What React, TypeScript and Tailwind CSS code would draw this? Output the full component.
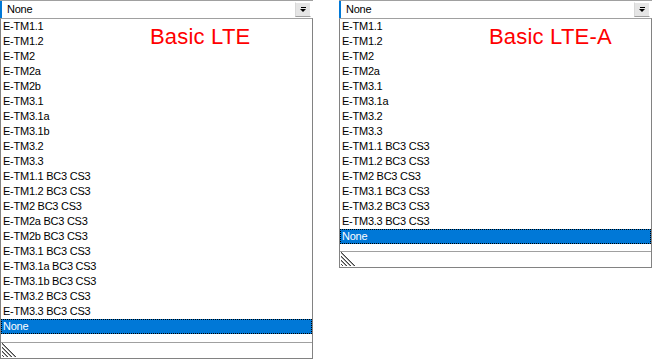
const basicLte = [
  "E-TM1.1",
  "E-TM1.2",
  "E-TM2",
  "E-TM2a",
  "E-TM2b",
  "E-TM3.1",
  "E-TM3.1a",
  "E-TM3.1b",
  "E-TM3.2",
  "E-TM3.3",
  "E-TM1.1 BC3 CS3",
  "E-TM1.2 BC3 CS3",
  "E-TM2 BC3 CS3",
  "E-TM2a BC3 CS3",
  "E-TM2b BC3 CS3",
  "E-TM3.1 BC3 CS3",
  "E-TM3.1a BC3 CS3",
  "E-TM3.1b BC3 CS3",
  "E-TM3.2 BC3 CS3",
  "E-TM3.3 BC3 CS3",
];

const basicLteA = [
  "E-TM1.1",
  "E-TM1.2",
  "E-TM2",
  "E-TM2a",
  "E-TM3.1",
  "E-TM3.1a",
  "E-TM3.2",
  "E-TM3.3",
  "E-TM1.1 BC3 CS3",
  "E-TM1.2 BC3 CS3",
  "E-TM2 BC3 CS3",
  "E-TM3.1 BC3 CS3",
  "E-TM3.2 BC3 CS3",
  "E-TM3.3 BC3 CS3",
];

// size grip, lower-left corner
const Grip = () => (
  <svg width="14" height="14" viewBox="0 0 14 14" className="block">
    {[0, 1, 4, 5, 8, 9, 12].map((o) => (
      <line key={o} x1="0" y1={o} x2={14 - o} y2="14" stroke={o % 4 === 0 ? "#444" : "#999"} strokeWidth="1" shapeRendering="crispEdges" />
    ))}
  </svg>
);

const Combo = () => (
  <div className="h-[18px] flex border-t border-[#a0a0a0] bg-white">
    <div className="w-[2px] bg-[#0078d7]" />
    <div className="flex-1 pl-[5px] leading-[16px]">None</div>
    <div className="w-[16px] h-[15px] mt-[1px] mr-[2px] bg-[#e5e5e5] border-r border-t border-white border-b border-l border-b-[#a0a0a0] border-l-[#d8d8d8] flex flex-col items-center justify-center">
      <div className="w-[5px] h-[1px] bg-black mb-[1px]" />
      <div className="w-0 h-0 border-l-[3px] border-r-[3px] border-t-[3px] border-l-transparent border-r-transparent border-t-black" />
    </div>
  </div>
);

const Panel = ({ items, label, gap }: { items: string[]; label: string; gap: string }) => (
  <div className="w-[313px] flex flex-col">
    <Combo />
    <div className="relative border border-[#828282] border-t-[#a0a0a0] bg-white">
      {items.map((t) => (
        <div key={t} className="h-[15px] pl-[2px] leading-[15px]">
          {t}
        </div>
      ))}
      <div className="h-[15px] pl-[2px] leading-[15px] bg-[#0078d7] text-white outline outline-1 outline-dotted outline-black -outline-offset-1">
        None
      </div>
      <div className={gap} />
      <div className="h-[16px] border-t border-[#a0a0a0] pl-[1px]">
        <Grip />
      </div>
      <div className="absolute top-[5px] left-[149px] text-[22px] leading-[26px] tracking-[0.2px] text-[#ff0000]">{label}</div>
    </div>
  </div>
);

export default function App() {
  return (
    <div className="w-[652px] h-[359px] bg-white flex items-start gap-[26px] text-[11px] tracking-[-0.25px] text-black font-['Liberation_Sans',sans-serif]">
      <Panel items={basicLte} label="Basic LTE" gap="h-[8px]" />
      <Panel items={basicLteA} label="Basic LTE-A" gap="h-[7px]" />
    </div>
  );
}
